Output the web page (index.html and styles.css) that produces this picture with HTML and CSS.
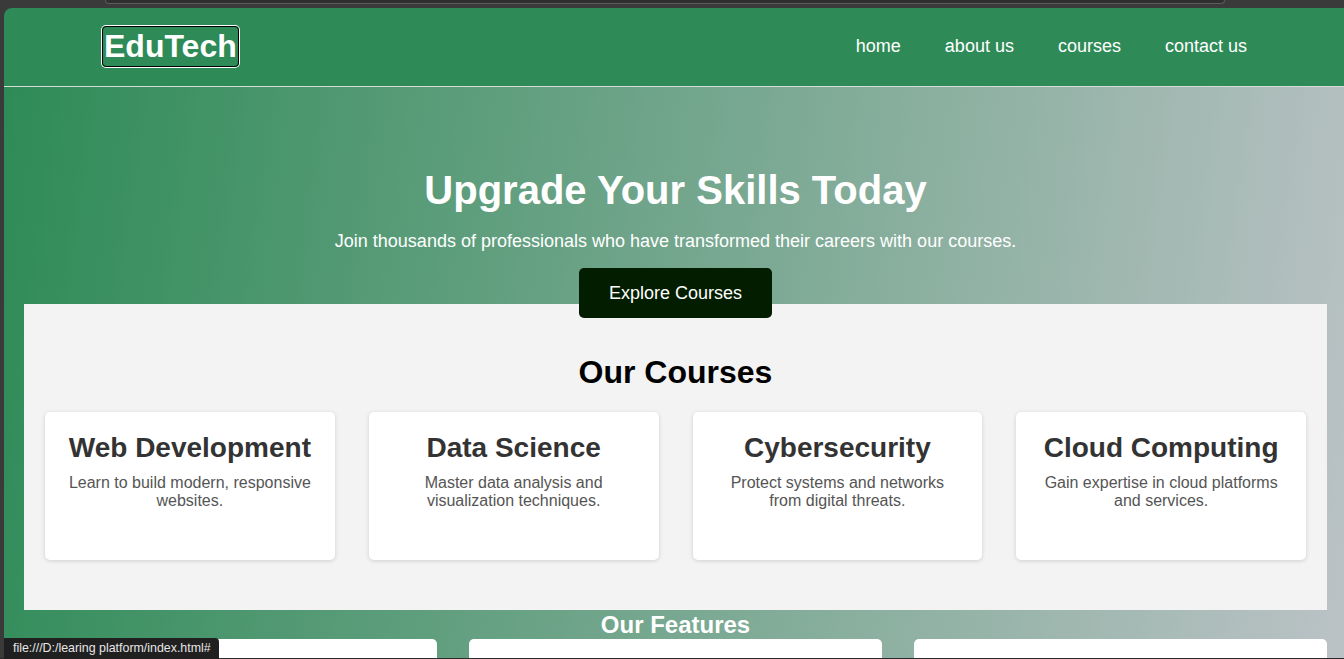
FILE: index.html
```html
<!DOCTYPE html>
<html lang="en">
<head>
<meta charset="UTF-8">
<title>EduTech</title>
<link rel="stylesheet" href="styles.css">
</head>
<body>
<div class="chrome"><div class="chrome-bar"></div></div>
<div class="window">
  <header class="site-header">
    <div class="logo">EduTech</div>
    <nav class="nav">
      <a href="#">home</a>
      <a href="#">about us</a>
      <a href="#">courses</a>
      <a href="#">contact us</a>
    </nav>
  </header>
  <main class="main">
    <section class="hero">
      <h1>Upgrade Your Skills Today</h1>
      <p>Join thousands of professionals who have transformed their careers with our courses.</p>
      <a href="#" class="btn">Explore Courses</a>
    </section>
    <section class="courses">
      <h2>Our Courses</h2>
      <div class="course-grid">
        <div class="card">
          <h3>Web Development</h3>
          <p>Learn to build modern, responsive websites.</p>
        </div>
        <div class="card">
          <h3>Data Science</h3>
          <p>Master data analysis and visualization techniques.</p>
        </div>
        <div class="card">
          <h3>Cybersecurity</h3>
          <p>Protect systems and networks from digital threats.</p>
        </div>
        <div class="card">
          <h3>Cloud Computing</h3>
          <p>Gain expertise in cloud platforms and services.</p>
        </div>
      </div>
    </section>
    <section class="features">
      <h2>Our Features</h2>
      <div class="feature-grid">
        <div class="feature-card"></div>
        <div class="feature-card"></div>
        <div class="feature-card"></div>
      </div>
    </section>
  </main>
</div>
<div class="status">file:///D:/learing platform/index.html#</div>
<div class="bottom-line"></div>
</body>
</html>
```
FILE: styles.css
```css
* { box-sizing: border-box; }
html, body {
  margin: 0;
  padding: 0;
  height: 659px;
  overflow: hidden;
}
body {
  background: #3a3a3a;
  font-family: "Liberation Sans", Arial, sans-serif;
}
.chrome {
  height: 8px;
  padding: 0 119px 0 105px;
}
.chrome-bar {
  height: 4px;
  background: #2f2f2f;
  border: 1px solid #5c5c5c;
  border-top: none;
  border-radius: 0 0 8px 8px;
}
.window {
  margin-left: 4px;
  width: 1343px;
  border-top-left-radius: 8px;
  overflow: hidden;
  height: 651px;
}
.site-header {
  height: 79px;
  background: #2e8b57;
  border-bottom: 1px solid #d6dcd8;
  display: flex;
  align-items: center;
  justify-content: space-between;
  padding: 0 100px 0 98px;
}
.logo {
  color: #fff;
  font-size: 32px;
  font-weight: bold;
  line-height: 39px;
  padding: 0 1px;
  border: 1px solid #000;
  border-radius: 4px;
  box-shadow: 0 0 0 1px #fff;
  margin-top: -2px;
}
.nav {
  display: flex;
  gap: 44px;
  margin-top: -2px;
}
.nav a {
  color: #fff;
  text-decoration: none;
  font-size: 18px;
}
.main {
  background: linear-gradient(98deg, #2e8b57 0%, #bdc3c7 100%);
  min-height: 600px;
}
.hero {
  text-align: center;
  color: #fff;
  padding-top: 80px;
}
.hero h1 {
  margin: 0;
  font-size: 40px;
  line-height: 46px;
}
.hero p {
  margin: 18px 0 16px;
  font-size: 18px;
  line-height: 21px;
}
.btn {
  position: relative;
  z-index: 1;
  display: inline-block;
  background: #031d00;
  color: #fff;
  text-decoration: none;
  font-size: 18px;
  line-height: 20px;
  padding: 15px 30px;
  border-radius: 5px;
}
.courses {
  margin: -14px 20px 0;
  padding: 50px 21px 50px;
  background: #f3f3f3;
  text-align: center;
}
.courses h2 {
  margin: 0 0 21px;
  font-size: 32px;
  line-height: 37px;
  color: #000;
}
.course-grid {
  display: grid;
  grid-template-columns: repeat(4, 1fr);
  gap: 34px;
}
.card {
  background: #fff;
  border-radius: 5px;
  box-shadow: 0 1px 4px rgba(0, 0, 0, 0.15);
  height: 148px;
  padding: 19px 20px;
}
.card h3 {
  margin: 0 0 10px;
  font-size: 28px;
  line-height: 33px;
  color: #333;
}
.card p {
  margin: 0;
  font-size: 16px;
  line-height: 18px;
  color: #555;
}
.features {
  text-align: center;
}
.features h2 {
  margin: 0;
  color: #fff;
  font-size: 24px;
  line-height: 29px;
}
.feature-grid {
  display: grid;
  grid-template-columns: repeat(3, 1fr);
  gap: 32px;
  margin: 0 20px;
}
.feature-card {
  background: #fff;
  border-radius: 5px;
  height: 150px;
}
.status {
  position: fixed;
  left: 4px;
  bottom: 0;
  height: 21px;
  padding: 0 8px 0 9px;
  background: #202020;
  color: #e6e6e6;
  font-family: "Liberation Sans", Arial, sans-serif;
  font-size: 12.4px;
  line-height: 21px;
  border-top-right-radius: 4px;
  white-space: nowrap;
  z-index: 5;
}
.bottom-line {
  position: fixed;
  left: 0;
  right: 0;
  bottom: 0;
  height: 1px;
  background: #2a2a2a;
  z-index: 4;
}
```
